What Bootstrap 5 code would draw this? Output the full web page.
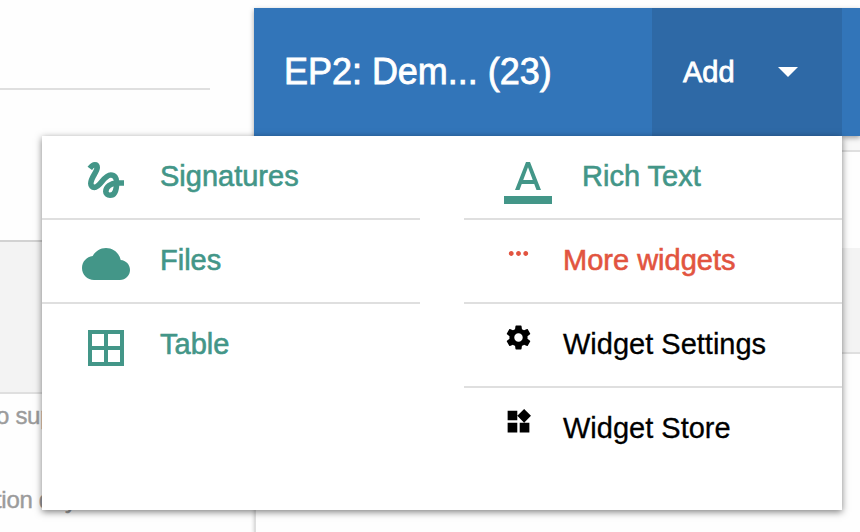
<!DOCTYPE html>
<html lang="en">
<head>
<meta charset="utf-8">
<title>EP2: Demo</title>
<link href="https://cdn.jsdelivr.net/npm/bootstrap@5.3.0/dist/css/bootstrap.min.css" rel="stylesheet">
<style>
body { font-family: "Liberation Sans", Arial, sans-serif; width: 860px; height: 532px; background: #fefefe; }
.side-pane { width: 254px; }
.side-rule { width: 210px; height: 90px; border-bottom: 2px solid #dfdfdf; }
.side-band { margin-top: 150px; height: 154px; background: #f3f3f3; border-top: 2px solid #d2d2d2; border-bottom: 2px solid #dfdfdf; }
.side-copy { font-size: 24px; line-height: 28px; letter-spacing: -.3px; color: #9b9b9b; -webkit-text-stroke: .4px; }
.copy-a { margin: 8px 0 0 -4px; }
.copy-b { margin: 56px 0 0 -5px; }
.main-pane { padding-top: 8px; }
.title-bar { height: 128px; background: #3275b9; color: #fff; box-shadow: 0 2px 5px rgba(0,0,0,.35); z-index: 1; }
.title-text { width: 398px; padding-left: 30px; font-size: 36px; line-height: 42px; letter-spacing: -.03px; -webkit-text-stroke: .8px; }
.add-btn { width: 190px; padding: 0 44px 0 31px; background: #2e69a6; border: 0; color: #fff; font-size: 29px; line-height: 34px; -webkit-text-stroke: .8px; }
.panel-body { box-shadow: 0 0 3px 1px rgba(0,0,0,.12); border-left: 2px solid #dedede; }
.sub-bar { height: 16px; background: #f8f8f8; border-bottom: 2px solid #dfdfdf; }
.main-band { margin-top: 96px; height: 106px; background: #f3f3f3; border-bottom: 2px solid #dfdfdf; }
.add-menu { left: 42px; top: 136px; width: 800px; height: 374px; background: #fff; box-shadow: 0 2px 7px rgba(0,0,0,.5); z-index: 5; }
.menu-col { width: 378px; }
.menu-gap { gap: 44px; }
.entry { height: 84px; border-bottom: 2px solid #dfdfdf; font-size: 29px; line-height: 34px; color: #000; text-decoration: none; padding-left: 40px; -webkit-text-stroke: .3px; }
.entry.teal, .entry.coral { -webkit-text-stroke: .6px; }
.entry:last-child { border-bottom: 0; }
.entry svg { flex: none; fill: currentColor; }
.entry svg.icon-line { fill: none; stroke: currentColor; stroke-width: 2.8; }
.icon-lg { width: 48px; height: 48px; margin-top: 20px; }
.icon-sm { width: 29px; height: 29px; margin-top: 19px; }
.entry span { margin: 23px 0 0 30px; white-space: nowrap; }
.teal { color: #439688; }
.coral { color: #e25440; }
</style>
<script src="https://cdn.jsdelivr.net/npm/bootstrap@5.3.0/dist/js/bootstrap.bundle.min.js"></script>
</head>
<body class="position-relative overflow-hidden">
<div class="d-flex h-100">
  <aside class="side-pane flex-shrink-0 overflow-hidden">
    <div class="side-rule"></div>
    <div class="side-band"></div>
    <div class="side-copy copy-a">o sup</div>
    <div class="side-copy copy-b">tion day</div>
  </aside>
  <main class="main-pane flex-grow-1 d-flex flex-column">
    <header class="title-bar d-flex position-relative flex-shrink-0">
      <div class="title-text align-self-center text-nowrap">EP2: Dem... (23)</div>
      <button class="add-btn d-flex align-items-center justify-content-between" type="button">Add
        <svg width="20" height="10" viewBox="0 0 20 10" fill="#fff"><path d="M0 0h20L10 10z"/></svg>
      </button>
    </header>
    <div class="panel-body flex-grow-1">
      <div class="sub-bar"></div>
      <div class="main-band"></div>
    </div>
  </main>
</div>
<nav class="add-menu position-absolute d-flex menu-gap">
  <div class="menu-col">
    <a class="entry d-flex align-items-start teal" href="#"><svg class="icon-lg icon-line" viewBox="0 0 24 24"><path d="M3.9 6.2C4.8 5 5.6 4.4 6.4 4.4c.8 0 1.2.5 1.2 1.4 0 2.2-3.2 4.9-3.2 8 0 1.2.7 1.9 1.8 1.9 3 0 4.7-6.2 8.2-6.2 1.9 0 2.9 1.4 2.9 3.7 0 4-1.2 6.4-3.3 6.4-1.2 0-2.1-.7-2.1-1.9 0-2.4 2.6-4.2 5.6-4.2H21"/></svg><span>Signatures</span></a>
    <a class="entry d-flex align-items-start teal" href="#"><svg class="icon-lg" viewBox="0 0 24 24"><path d="M19.35 10.04C18.67 6.59 15.64 4 12 4 9.11 4 6.6 5.64 5.35 8.04 2.34 8.36 0 10.91 0 14c0 3.31 2.69 6 6 6h13c2.76 0 5-2.24 5-5 0-2.64-2.05-4.78-4.65-4.96z"/></svg><span>Files</span></a>
    <a class="entry d-flex align-items-start teal" href="#"><svg class="icon-lg" viewBox="0 0 24 24"><path d="M3 3v18h18V3H3zm8 16H5v-6h6v6zm0-8H5V5h6v6zm8 8h-6v-6h6v6zm0-8h-6V5h6v6z"/></svg><span>Table</span></a>
  </div>
  <div class="menu-col">
    <a class="entry d-flex align-items-start teal" href="#"><svg class="icon-lg" viewBox="0 0 24 24"><path d="M0 20h24v4H0zM11 3L5.5 17h2.25l1.12-3h6.25l1.12 3h2.25L13 3h-2zm-1.38 9L12 5.67 14.38 12H9.62z"/></svg><span>Rich Text</span></a>
    <a class="entry d-flex align-items-start coral" href="#"><svg class="icon-sm" viewBox="0 0 24 24"><path d="M6 10c-1.1 0-2 .9-2 2s.9 2 2 2 2-.9 2-2-.9-2-2-2zm12 0c-1.1 0-2 .9-2 2s.9 2 2 2 2-.9 2-2-.9-2-2-2zm-6 0c-1.1 0-2 .9-2 2s.9 2 2 2 2-.9 2-2-.9-2-2-2z"/></svg><span>More widgets</span></a>
    <a class="entry d-flex align-items-start" href="#"><svg class="icon-sm" viewBox="0 0 24 24"><path d="M19.43 12.98c.04-.32.07-.64.07-.98s-.03-.66-.07-.98l2.11-1.65c.19-.15.24-.42.12-.64l-2-3.46c-.12-.22-.39-.3-.61-.22l-2.49 1c-.52-.4-1.08-.73-1.69-.98l-.38-2.65C14.46 2.18 14.25 2 14 2h-4c-.25 0-.46.18-.49.42l-.38 2.65c-.61.25-1.17.59-1.69.98l-2.49-1c-.23-.09-.49 0-.61.22l-2 3.46c-.13.22-.07.49.12.64l2.11 1.65c-.04.32-.07.65-.07.98s.03.66.07.98l-2.11 1.65c-.19.15-.24.42-.12.64l2 3.46c.12.22.39.3.61.22l2.49-1c.52.4 1.08.73 1.69.98l.38 2.65c.03.24.24.42.49.42h4c.25 0 .46-.18.49-.42l.38-2.65c.61-.25 1.17-.59 1.69-.98l2.49 1c.23.09.49 0 .61-.22l2-3.46c.12-.22.07-.49-.12-.64l-2.11-1.65zM12 15.5c-1.93 0-3.5-1.57-3.5-3.5s1.57-3.5 3.5-3.5 3.5 1.57 3.5 3.5-1.57 3.5-3.5 3.5z"/></svg><span>Widget Settings</span></a>
    <a class="entry d-flex align-items-start" href="#"><svg class="icon-sm" viewBox="0 0 24 24"><path d="M13 13v8h8v-8h-8zM3 21h8v-8H3v8zM3 3v8h8V3H3zm13.66-1.31L11 7.34 16.66 13l5.66-5.66-5.66-5.65z"/></svg><span>Widget Store</span></a>
  </div>
</nav>
</body>
</html>
